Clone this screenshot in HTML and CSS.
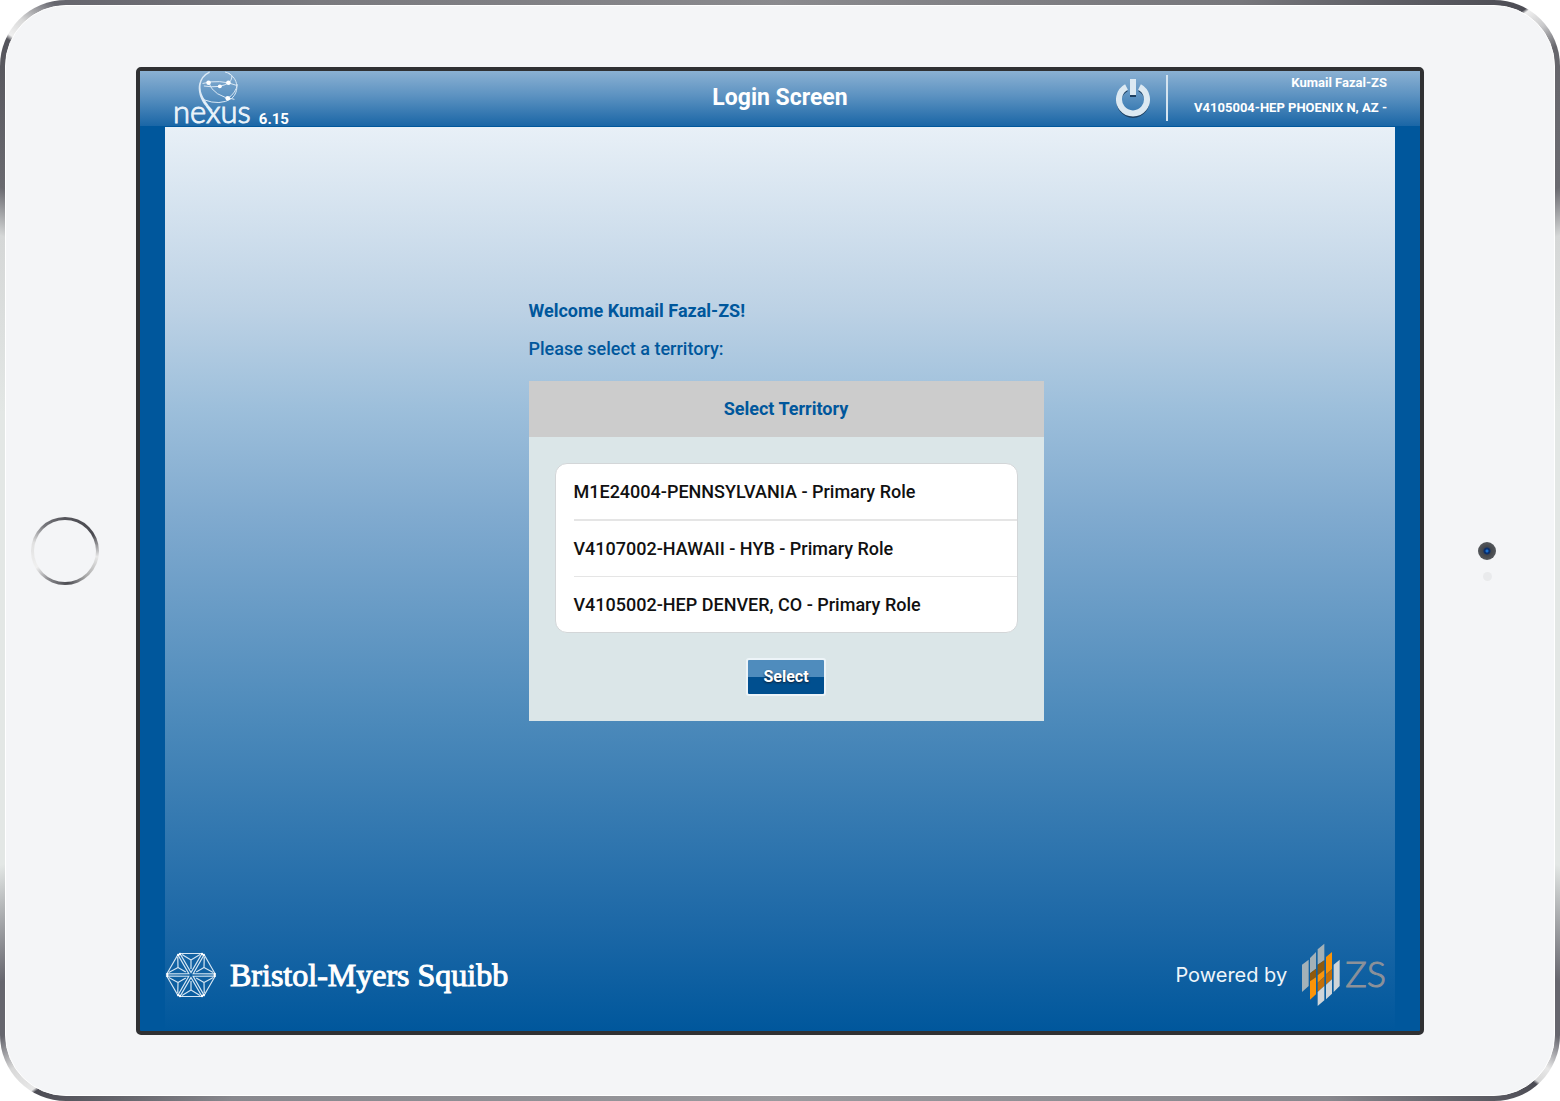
FILE: index.html
```html
<!DOCTYPE html>
<html lang="en">
<head>
<meta charset="utf-8">
<meta name="viewport" content="width=device-width, initial-scale=1">
<title>Nexus - Login Screen</title>
<link rel="stylesheet" href="styles.css">
</head>
<body>
<div class="device">
  <div class="face">
    <div class="bezel bezel-home"><span class="home"></span></div>
    <div class="screen">
      <header class="topbar">
        <div class="brand">
          <div class="nexus">
            <svg class="globe" viewBox="200 35 130 120" fill="none" stroke="#dbe9f5" stroke-linecap="round" aria-hidden="true">
              <path d="M238 38C204 54 200 92 224 126Q234 142 246 154Q226 142 218 126C198 88 206 54 238 38Z" fill="#fff" stroke-width="4"/>
              <path d="M286 38Q304 42 306 52M296 42C324 56 330 96 304 118Q270 140 222 122" stroke-width="3"/>
              <path d="M218 72Q268 58 320 78M222 80Q270 88 296 70M235 70Q250 112 312 120M306 52Q304 66 296 70M322 76Q318 100 294 117" stroke-width="3"/>
              <g fill="#fff" stroke="none"><circle cx="235" cy="70" r="7"/><circle cx="269" cy="81" r="6"/><circle cx="295" cy="70" r="7"/><circle cx="293" cy="117" r="7"/></g>
            </svg>
            <span class="nexus-name">nexus</span>
          </div>
          <span class="version">6.15</span>
        </div>
        <h1 class="title">Login Screen</h1>
        <div class="account">
          <button class="power" type="button" aria-label="Log out">
            <svg viewBox="0 0 36 42" fill="none" aria-hidden="true">
              <g stroke="#1d3f60"><path d="M11.500 9A14 14 0 1 0 24.500 9" stroke-width="5" transform="translate(0 2)"/><path d="M18 4V19" stroke-width="6"/></g>
              <g stroke="#dce9f2"><path d="M11.500 9A14 14 0 1 0 24.500 9" stroke-width="6"/><path d="M18 1V17" stroke-width="6"/></g>
            </svg>
          </button>
          <div class="user"><span>Kumail Fazal-ZS</span><span>V4105004-HEP PHOENIX N, AZ -</span></div>
        </div>
      </header>
      <div class="stage">
        <main class="login">
          <form class="picker">
            <h2 class="welcome">Welcome Kumail Fazal-ZS!</h2>
            <p class="prompt">Please select a territory:</p>
            <section class="panel">
              <h3 class="panel-title">Select Territory</h3>
              <div class="panel-body">
                <div class="options" role="radiogroup" aria-label="Territory">
                  <label class="option"><input type="radio" name="territory"><span>M1E24004-PENNSYLVANIA - Primary Role</span></label>
                  <label class="option"><input type="radio" name="territory"><span>V4107002-HAWAII - HYB - Primary Role</span></label>
                  <label class="option"><input type="radio" name="territory"><span>V4105002-HEP DENVER, CO - Primary Role</span></label>
                </div>
                <button class="select" type="button">Select</button>
              </div>
            </section>
          </form>
        </main>
        <footer class="footer">
          <div class="bms">
            <svg class="bms-mark" viewBox="-26 -23 52 46" fill="none" stroke="#d5e6f3" aria-hidden="true">
              <defs><g id="facet"><path d="M0-2.500L-11-21.500H11Z" stroke-width="1.200"/><path d="M0-15V-6M0-15L-9-20.500M0-15L9-20.500" stroke-width="1.200"/><circle cx="-11" cy="-21" r="1.200" fill="#fff" stroke="none"/><circle cx="11" cy="-21" r="1.200" fill="#fff" stroke="none"/></g></defs>
              <use href="#facet"/><use href="#facet" transform="rotate(60)"/><use href="#facet" transform="rotate(120)"/><use href="#facet" transform="rotate(180)"/><use href="#facet" transform="rotate(240)"/><use href="#facet" transform="rotate(300)"/>
            </svg>
            <span class="bms-name">Bristol-Myers Squibb</span>
          </div>
          <div class="powered">
            <span class="powered-by">Powered by</span>
            <svg class="zs-mark" viewBox="430 40 120 195" aria-hidden="true">
              <path fill="#a3b1b8" d="M433 108L453 93V172L433 190ZM457 88L475 70V120L457 134ZM480 62L500 45V95L480 108Z"/>
              <path fill="#8f5a0c" d="M457 134L475 120V146L457 158ZM480 108L500 95V124L480 140Z"/>
              <path fill="#fb9408" d="M457 158L475 146V197L457 213ZM480 140L500 124V144L480 162ZM505 85L523 70V122L505 137Z"/>
              <path fill="#c46f08" d="M480 162L500 144V172L480 190ZM505 137L523 122V152L505 168Z"/>
              <path fill="#cfd5d9" d="M480 190L500 172V215L480 232ZM505 168L523 152V195L505 212ZM528 108L546 93V172L528 190Z"/>
            </svg>
            <span class="zs-name">ZS</span>
          </div>
        </footer>
      </div>
    </div>
    <div class="bezel bezel-camera"><span class="camera"></span><span class="sensor"></span></div>
  </div>
</div>
</body>
</html>
```
FILE: styles.css
```css
*, *::before, *::after { box-sizing: border-box; }
body { margin: 0; background: #fff; font-family: Roboto, "Liberation Sans", sans-serif; }
h1, h2, h3, p { margin: 0; }
button { font: inherit; border: 0; padding: 0; cursor: pointer; }

.device {
  display: flex;
  min-height: 100vh;
  padding: 5px;
  border-radius: 66px;
  background: conic-gradient(#8a8a8e 0deg, #77777c 40deg, #4c4c54 54deg, #f0f0f0 54.2deg, #c8c8ca 55.5deg, #66666c 57deg, #6a6a70 65deg, #d5d7d7 68deg, #e3e7e5 80deg, #e3e7e5 112deg, #66666e 119deg, #66666e 122deg, #e8e8e8 124deg, #d8d8d8 125deg, #4c4c54 125.2deg, #88888e 135deg, #9a9a9e 180deg, #88888e 225deg, #4c4c54 234deg, #e8e8e8 234.2deg, #d8d8d8 236deg, #66666e 238deg, #66666e 241deg, #e3e7e5 248deg, #e3e7e5 280deg, #d5d7d7 292deg, #6a6a70 295deg, #55555c 303.500deg, #f0f0f0 303.800deg, #d8d8d8 305deg, #66666e 307deg, #7a7a7f 320deg, #8a8a8e 360deg);
}
.face {
  display: flex;
  flex: 1;
  padding: 61px 0 60px;
  border: 1px solid #fff;
  border-radius: 61px;
  background: #f4f5f7;
}
.bezel {
  display: flex;
  flex: 0 0 130px;
  flex-direction: column;
  align-items: center;
  justify-content: center;
}
.bezel-home { padding-right: 12px; }
.home {
  width: 68px;
  height: 68px;
  border: 3px solid transparent;
  border-radius: 50%;
  background: linear-gradient(#f4f5f7, #f4f5f7) padding-box, conic-gradient(#55555b, #4a4a50 60deg, #e8e8e8 100deg, #aaa 140deg, #4c4c52 175deg, #88888c 210deg, #f0f0f0 240deg, #e0e0e0 285deg, #77777c 320deg, #55555b) border-box;
}
.bezel-camera { gap: 12px; padding: 21px 4px 0 0; }
.camera {
  width: 18px;
  height: 18px;
  border-radius: 50%;
  background: radial-gradient(circle, #1a70d0 0 1px, #0b2f6b 2px 3px, #43464b 4px, #55585c 9px);
}
.sensor { width: 9px; height: 9px; border-radius: 50%; background: #e9eaec; }

.screen {
  display: flex;
  flex: 1;
  flex-direction: column;
  border: 4px solid #303133;
  border-radius: 5px;
  background: #00579c;
}
.topbar {
  display: grid;
  grid-template-columns: 1fr auto 1fr;
  height: 55px;
  padding: 0 33px;
  background: linear-gradient(#8bb1d3, #5c92c1 45%, #1a66a6);
  color: #fff;
}
.brand { display: flex; gap: 8px; align-items: flex-start; }
.nexus { display: flex; flex-direction: column; align-items: center; }
.globe { width: 43px; height: 40px; margin-left: 14px; }
.nexus-name { margin-top: -10px; font: 300 31px/20px Lato, sans-serif; color: #eaf3fa; -webkit-text-stroke: 1px #eaf3fa; }
.version { padding-top: 38px; font-size: 15px; line-height: 20px; font-weight: 700; }
.title { font-size: 23px; line-height: 54px; font-weight: 700; }
.account { display: flex; justify-content: flex-end; gap: 15px; }
.power { width: 36px; height: 42px; margin-top: 7px; background: none; }
.power svg { display: block; width: 36px; height: 42px; }
.user {
  display: flex;
  flex-direction: column;
  width: 221px;
  height: 46px;
  margin-top: 4px;
  border-left: 2px solid #d5e4f0;
  text-align: right;
  font-size: 13px;
  line-height: 25px;
  font-weight: 700;
}
.user span:first-child { margin-top: -5px; }

.stage {
  display: flex;
  flex: 1;
  flex-direction: column;
  margin: 1px 25px 0;
  background: linear-gradient(#e8f0f7, #bdd2e5 20%, #9dbfdb 31%, #80aacf 43%, #4b89ba 66%, #1b67a6 89%, #00579c);
}
.login { display: flex; flex: 1; justify-content: center; padding: 170px 0 32px 12px; }
.picker { width: 515px; color: #00579c; }
.welcome, .prompt, .panel-title { font-size: 18px; font-weight: 500; }
.welcome { line-height: 28px; font-weight: 700; }
.prompt { margin: 10px 0 18px; line-height: 28px; }
.panel { background: #dbe6e8; }
.panel-title { background: #ccc; text-align: center; line-height: 56px; font-weight: 700; }
.panel-body { display: flex; flex-direction: column; align-items: center; padding: 26px 26px 25px; }
.options {
  width: 100%;
  padding-left: 18px;
  border: 1px solid #d3d6d8;
  border-radius: 12px;
  background: #fff;
  color: #111;
}
.option { display: block; font-size: 18px; line-height: 55px; font-weight: 500; cursor: pointer; }
.option + .option { border-top: 2px solid #e5e5e5; }
.option + .option + .option { border-top-width: 1px; }
.option input { position: absolute; opacity: 0; pointer-events: none; }
.select {
  width: 80px;
  height: 38px;
  margin-top: 25px;
  border: 2px solid #edf4f8;
  border-radius: 3px;
  background: linear-gradient(#4f8cbd 50%, #004f8f 50%);
  color: #fff;
  font: 700 16px/32px Roboto, sans-serif;
  text-shadow: 0 1px 2px #123;
}
.footer { display: flex; justify-content: space-between; align-items: center; padding: 0 9px 24px 0; color: #fff; }
.bms, .powered { display: flex; align-items: center; }
.bms { gap: 13px; }
.bms-mark { width: 52px; height: 46px; }
.bms-name { font: 400 32px/40px "Liberation Serif", serif; -webkit-text-stroke: 1px #fff; }
.powered-by { font: 400 20px/28px Inter, sans-serif; color: #eef5fa; }
.zs-mark { width: 40px; height: 65px; margin-left: 14px; }
.zs-name { margin-left: 4px; padding-bottom: 4px; font: 300 36px/44px Lato, sans-serif; color: #8c9199; -webkit-text-stroke: 1px #8c9199; }
```
